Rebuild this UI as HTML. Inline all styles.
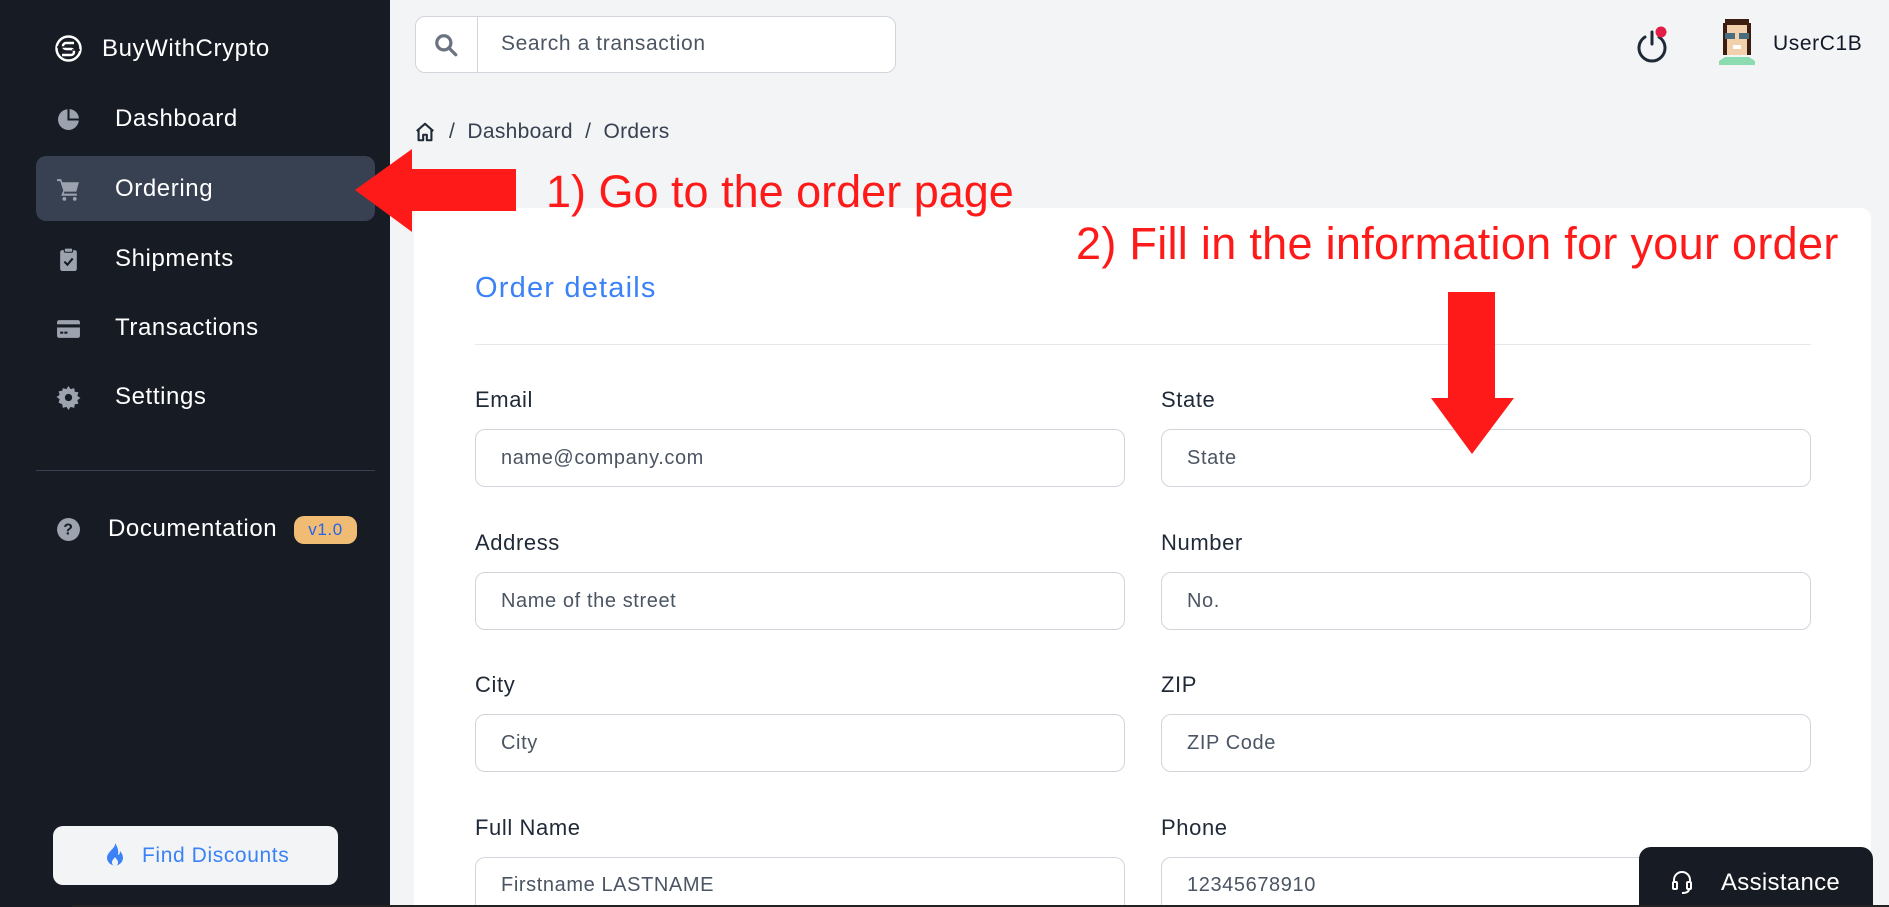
<!DOCTYPE html>
<html><head><meta charset="utf-8"><style>
*{box-sizing:border-box;margin:0;padding:0}
html,body{width:1889px;height:907px;overflow:hidden}
body{background:#f3f4f6;font-family:"Liberation Sans",sans-serif;position:relative;letter-spacing:0.6px}
.abs{position:absolute}
.side{left:0;top:0;width:390px;height:907px;background:#171b23}
.nav{position:absolute;left:0;width:390px;color:#fff;font-size:24px;display:flex;align-items:center}
.nav .t{position:absolute;left:115px}
.nav svg{position:absolute;left:56px}
.lbl{position:absolute;font-size:22px;color:#1f2937}
.inp{position:absolute;height:58px;border:1px solid #d1d5db;border-radius:10px;background:#fff;font-size:20px;color:#4b5563;padding-left:25px;display:flex;align-items:center}
.red{position:absolute;color:#ff1a1a;white-space:nowrap;letter-spacing:0.3px}
</style></head><body>
<div class="abs side"></div>
<svg class="abs" style="left:55px;top:35px" width="27" height="27" viewBox="0 0 27 27"><circle cx="13.5" cy="13.5" r="12" fill="none" stroke="#fff" stroke-width="2.5"/><path d="M19 8H11a3 3 0 0 0 0 6h5a3 3 0 0 1 0 6H7" fill="none" stroke="#fff" stroke-width="2.5"/><path d="M2 12h8M17 15h8" stroke="#171b23" stroke-width="1.5"/></svg>
<div class="abs" style="left:102px;top:35px;color:#fff;font-size:24px">BuyWithCrypto</div>
<div class="nav" style="top:101px;height:36px"><svg width="25" height="25" viewBox="0 0 24 24"><path d="M11 2.1A10 10 0 1 0 21.9 13H11z" fill="#9ca3af"/><path d="M13 2v9h9A9.5 9.5 0 0 0 13 2z" fill="#9ca3af"/></svg><span class="t">Dashboard</span></div>
<div class="abs" style="left:36px;top:156px;width:339px;height:65px;background:#384152;border-radius:10px"></div>
<div class="nav" style="top:171px;height:36px"><svg width="25" height="25" viewBox="0 0 24 24"><path d="M1 2h4l1 3h16l-2.5 9H8l-.5 2H20v2H5l2-5L4 4H1z" fill="#9ca3af"/><circle cx="8" cy="21" r="1.8" fill="#9ca3af"/><circle cx="18" cy="21" r="1.8" fill="#9ca3af"/></svg><span class="t">Ordering</span></div>
<div class="nav" style="top:241px;height:36px"><svg width="25" height="25" viewBox="0 0 24 24"><rect x="4" y="3" width="16" height="20" rx="2" fill="#9ca3af"/><rect x="8" y="1" width="8" height="4" rx="1" fill="#9ca3af" stroke="#171b23"/><path d="M8 14l3 3 5-6" fill="none" stroke="#171b23" stroke-width="2"/></svg><span class="t">Shipments</span></div>
<div class="nav" style="top:310px;height:36px"><svg width="25" height="25" viewBox="0 0 24 24"><rect x="1" y="4" width="22" height="17" rx="2" fill="#9ca3af"/><rect x="1" y="8" width="22" height="3" fill="#171b23"/><rect x="4" y="15" width="3" height="2" fill="#171b23"/><rect x="8" y="15" width="3" height="2" fill="#171b23"/></svg><span class="t">Transactions</span></div>
<div class="nav" style="top:379px;height:36px"><svg width="25" height="25" viewBox="0 0 24 24"><path d="M12 1l2 3 3.5-1 .5 3.5 3.5.5-1 3.5 3 2-3 2 1 3.5-3.5.5-.5 3.5-3.5-1-2 3-2-3-3.5 1-.5-3.5L2.5 17l1-3.5-3-2 3-2-1-3.5L6 5.5 6.5 3 10 4z" fill="#9ca3af"/><circle cx="12" cy="12" r="3.5" fill="#171b23"/></svg><span class="t">Settings</span></div>
<div class="abs" style="left:36px;top:470px;width:339px;height:1px;background:#374151"></div>
<div class="nav" style="top:511px;height:36px"><svg width="25" height="25" viewBox="0 0 24 24"><circle cx="12" cy="12" r="11" fill="#9ca3af"/><text x="12" y="17" font-size="15" font-weight="bold" text-anchor="middle" fill="#171b23" font-family="Liberation Sans">?</text></svg><span class="t" style="left:108px">Documentation</span></div>
<div class="abs" style="left:294px;top:516px;width:63px;height:28px;background:#f0bc74;border-radius:10px;color:#2563eb;font-size:17px;text-align:center;line-height:28px">v1.0</div>
<div class="abs" style="left:53px;top:826px;width:285px;height:59px;background:#f3f4f6;border-radius:10px;color:#3b82f6;font-size:21px;line-height:59px;padding-left:89px">Find Discounts</div>
<svg class="abs" style="left:104px;top:842px" width="22" height="26" viewBox="0 0 22 26"><path d="M11 1C12 6 4 9 3 15a8 8 0 0 0 16 1c0-3-2-6-3-7 0 3-1 4-2 4 1-5-1-9-3-12z" fill="#3b82f6"/><path d="M11 24a3.5 3.5 0 0 1-3-4c0-2 2-3 3-5 1 2 3 3 3 5a3.5 3.5 0 0 1-3 4z" fill="#f3f4f6"/></svg>

<div class="abs" style="left:415px;top:16px;width:481px;height:57px;background:#fff;border:1px solid #d1d5db;border-radius:10px"></div>
<div class="abs" style="left:477px;top:17px;width:1px;height:55px;background:#d1d5db"></div>
<svg class="abs" style="left:433px;top:32px" width="26" height="26" viewBox="0 0 24 24"><circle cx="10" cy="10" r="6.5" fill="none" stroke="#6b7280" stroke-width="3"/><path d="M15 15l6 6" stroke="#6b7280" stroke-width="3" stroke-linecap="round"/></svg>
<div class="abs" style="left:501px;top:32px;font-size:21px;color:#4b5563">Search a transaction</div>
<svg class="abs" style="left:1632px;top:26px" width="40" height="40" viewBox="0 0 40 40"><path d="M13 11a13 13 0 1 0 14 0" fill="none" stroke="#1f2937" stroke-width="3" stroke-linecap="round"/><path d="M20 6v12" stroke="#1f2937" stroke-width="3" stroke-linecap="round"/><circle cx="29" cy="6" r="5.5" fill="#e11d48"/></svg>
<svg class="abs" style="left:1717px;top:19px" width="40" height="46" viewBox="0 0 20 23" shape-rendering="crispEdges"><path d="M4 0h12v2h1v16H3V2h1z" fill="#3b1d12"/><path d="M5 3h10v15H5z" fill="#f3d0ac"/><path d="M4 7h5v3H4zM11 7h5v3h-5z" fill="#4a6c7f"/><path d="M8 13h4v2H8z" fill="#fff"/><path d="M4 19h12l3 2v2H1v-2z" fill="#8ddbb0"/></svg>
<div class="abs" style="left:1773px;top:32px;font-size:21px;color:#111827">UserC1B</div>

<svg class="abs" style="left:414px;top:121px" width="22" height="22" viewBox="0 0 24 24"><path d="M3 11l9-8 9 8M5 9v12h5v-6h4v6h5V9" fill="none" stroke="#1f2937" stroke-width="2.3" stroke-linejoin="round"/></svg>
<div class="abs" style="left:449px;top:120px;font-size:21px;color:#374151;letter-spacing:0.3px">/ &nbsp;Dashboard &nbsp;/ &nbsp;Orders</div>

<div class="abs" style="left:414px;top:208px;width:1457px;height:699px;background:#fff;border-radius:10px 10px 0 0"></div>
<div class="abs" style="left:475px;top:272px;font-size:29px;color:#3b82f6;letter-spacing:1.2px">Order details</div>
<div class="abs" style="left:475px;top:344px;width:1336px;height:1px;background:#e5e7eb"></div>

<div class="lbl" style="left:475px;top:387px">Email</div>
<div class="lbl" style="left:1161px;top:387px">State</div>
<div class="inp" style="left:475px;top:429px;width:650px">name@company.com</div>
<div class="inp" style="left:1161px;top:429px;width:650px">State</div>
<div class="lbl" style="left:475px;top:530px">Address</div>
<div class="lbl" style="left:1161px;top:530px">Number</div>
<div class="inp" style="left:475px;top:572px;width:650px">Name of the street</div>
<div class="inp" style="left:1161px;top:572px;width:650px">No.</div>
<div class="lbl" style="left:475px;top:672px">City</div>
<div class="lbl" style="left:1161px;top:672px">ZIP</div>
<div class="inp" style="left:475px;top:714px;width:650px">City</div>
<div class="inp" style="left:1161px;top:714px;width:650px">ZIP Code</div>
<div class="lbl" style="left:475px;top:815px">Full Name</div>
<div class="lbl" style="left:1161px;top:815px">Phone</div>
<div class="inp" style="left:475px;top:857px;width:650px;height:48px;align-items:flex-start;padding-top:16px;border-bottom:none;border-radius:10px 10px 0 0">Firstname LASTNAME</div>
<div class="inp" style="left:1161px;top:857px;width:650px;height:48px;align-items:flex-start;padding-top:16px;border-bottom:none;border-radius:10px 10px 0 0">12345678910</div>

<div class="abs" style="left:1639px;top:847px;width:234px;height:60px;background:#171b23;border-radius:12px 12px 0 0"></div>
<svg class="abs" style="left:1670px;top:869px" width="24" height="26" viewBox="0 0 24 26"><path d="M4 14V11a8 8 0 0 1 16 0v3" fill="none" stroke="#fff" stroke-width="2"/><rect x="3" y="13" width="4" height="7" rx="1" fill="none" stroke="#fff" stroke-width="2"/><rect x="17" y="13" width="4" height="7" rx="1" fill="none" stroke="#fff" stroke-width="2"/><path d="M19 20c0 3-3 4-7 4" fill="none" stroke="#fff" stroke-width="2"/></svg>
<div class="abs" style="left:1721px;top:869px;color:#fff;font-size:24px;letter-spacing:0.3px">Assistance</div>
<div class="abs" style="left:72px;top:905px;width:1817px;height:2px;background:#222"></div>

<svg class="abs" style="left:355px;top:148px" width="165" height="85" viewBox="0 0 165 85"><path d="M0 42L57 1v20h104v42H57v21z" fill="#ff1a1a"/></svg>
<div class="red" style="left:546px;top:166px;font-size:45px;letter-spacing:0">1) Go to the order page</div>
<div class="red" style="left:1076px;top:218px;font-size:45px;letter-spacing:0.3px">2) Fill in the information for your order</div>
<svg class="abs" style="left:1430px;top:292px" width="85" height="164" viewBox="0 0 85 164"><path d="M18 0h47v106h19l-42 56L1 106h17z" fill="#ff1a1a"/></svg>
</body></html>
